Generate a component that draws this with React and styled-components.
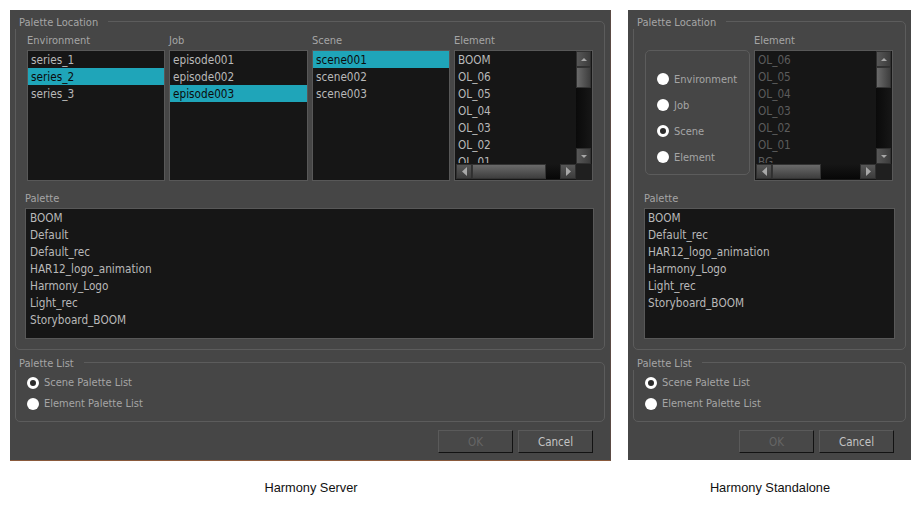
import React from "react";
import styled, { createGlobalStyle } from "styled-components";

const Global = createGlobalStyle`
  html, body { margin: 0; background: #fff; }
  body { font-family: "DejaVu Sans", "Noto Sans", sans-serif; font-stretch: condensed; font-size: 11px; }
`;

const Page = styled.div`
  display: flex;
  gap: 17px;
  width: 923px;
  height: 512px;
  box-sizing: border-box;
  padding: 10px 0 0 10px;
`;
const Column = styled.div`
  display: flex;
  flex-direction: column;
  width: ${(p) => p.$width}px;
`;
const Dialog = styled.div`
  box-sizing: border-box;
  height: ${(p) => p.$height}px;
  padding: 11px 5px 0;
  background: #464646;
  display: flex;
  flex-direction: column;
  border-right: ${(p) => (p.$edge ? "1px solid #5a4a44" : "0")};
  border-bottom: ${(p) => (p.$edge ? "1px solid #8a5a3c" : "0")};
`;
const Caption = styled.div`
  margin-top: ${(p) => p.$top}px;
  padding-left: 1px;
  text-align: center;
  font-family: "Liberation Sans", Arial, sans-serif;
  font-stretch: normal;
  font-size: 12.8px;
  line-height: 16px;
  color: #111;
`;
const Group = styled.section`
  position: relative;
  box-sizing: border-box;
  height: ${(p) => p.$height}px;
  margin-bottom: ${(p) => p.$bottom}px;
  padding: ${(p) => p.$top}px 10px 0 ${(p) => p.$side}px;
  border: 1px solid #5c5c5c;
  border-radius: 5px;
`;
const GroupTitle = styled.h2`
  position: absolute;
  left: -1px;
  top: -6px;
  margin: 0;
  padding: 0 10px 0 4px;
  background: #464646;
  color: #a5a5a5;
  font-size: 11px;
  font-weight: 400;
  line-height: 13px;
`;
const Lists = styled.div`
  display: grid;
  grid-template-columns: ${(p) => p.$cols};
  column-gap: 4px;
  margin-left: ${(p) => p.$left}px;
  margin-right: ${(p) => p.$right}px;
`;
const Field = styled.div`
  display: flex;
  flex-direction: column;
`;
const Label = styled.div`
  height: 17px;
  margin-top: ${(p) => p.$top || 0}px;
  color: #a5a5a5;
  line-height: 15px;
`;
const ListBox = styled.div`
  position: relative;
  box-sizing: border-box;
  height: 131px;
  background: #161616;
  border: 1px solid #585858;
  overflow: hidden;
`;
const Viewport = styled.div`
  height: 112px;
  overflow: hidden;
`;
const Item = styled.div`
  height: 17px;
  font-size: 11.7px;
  line-height: 18px;
  padding-left: ${(p) => p.$pad}px;
  white-space: nowrap;
  color: ${(p) => (p.$selected ? "#0c0c0c" : p.$dim ? "#5c5c5c" : "#b9b9b9")};
  background: ${(p) => (p.$selected ? "#1fa5b9" : "transparent")};
`;
const VBar = styled.div`
  position: absolute;
  top: 0;
  right: 1px;
  width: 15px;
  bottom: 16px;
  display: flex;
  flex-direction: column;
  background: linear-gradient(90deg, #0a0a0a, #161616);
`;
const HBar = styled.div`
  position: absolute;
  left: 1px;
  right: 16px;
  bottom: 1px;
  height: 15px;
  display: flex;
  background: linear-gradient(180deg, #161616, #070707);
`;
const Corner = styled.div`
  position: absolute;
  right: 0;
  bottom: 0;
  width: 16px;
  height: 16px;
  background: #1f1f1f;
`;
const ArrowButton = styled.div`
  flex: none;
  box-sizing: border-box;
  width: ${(p) => (p.$vertical ? "15px" : "16px")};
  height: ${(p) => (p.$vertical ? "16px" : "15px")};
  display: flex;
  align-items: center;
  justify-content: center;
  background: linear-gradient(${(p) => (p.$vertical ? "90deg" : "180deg")}, #575757, #3c3c3c);
  border: 1px solid #303030;
`;
const Thumb = styled.div`
  flex: none;
  box-sizing: border-box;
  ${(p) => (p.$vertical ? `height: ${p.$size}px;` : `width: ${p.$size}px;`)}
  background: linear-gradient(${(p) => (p.$vertical ? "90deg" : "180deg")}, #6a6a6a, #3e3e3e);
  border: 1px solid #333;
`;
const Track = styled.div`
  flex: 1;
`;
const RadioBox = styled.div`
  box-sizing: border-box;
  height: 125px;
  margin-top: 17px;
  border: 1px solid #5c5c5c;
  border-radius: 5px;
  padding: 11px 0 0 11px;
  display: flex;
  flex-direction: column;
  justify-content: center;
  gap: 9px;
`;
const RadioRow = styled.div`
  display: flex;
  align-items: center;
  gap: 5px;
  height: 17px;
  color: #a5a5a5;
`;
const RadioDot = styled.span`
  flex: none;
  box-sizing: border-box;
  width: 12px;
  height: 12px;
  border-radius: 50%;
  background: ${(p) => (p.$on ? "#2b2b2b" : "#fff")};
  border: ${(p) => (p.$on ? "3px solid #fff" : "0")};
`;
const RadioStack = styled.div`
  display: flex;
  flex-direction: column;
  gap: 4px;
  padding: 0 0 0 ${(p) => p.$left}px;
`;
const Buttons = styled.div`
  display: flex;
  justify-content: flex-end;
  gap: 5px;
  padding-right: ${(p) => p.$right}px;
`;
const Button = styled.button`
  box-sizing: border-box;
  width: 75px;
  height: 23px;
  padding: 1px 0 0;
  font-family: inherit;
  font-stretch: condensed;
  font-size: 11.5px;
  background: #484848;
  color: ${(p) => (p.disabled ? "#656565" : "#c4c4c4")};
  border: 1px solid;
  border-color: #5a5a5a #121212 #121212 #5a5a5a;
`;

const Arrow = ({ dir }) => {
  const pts = {
    up: "0,4 6,4 3,1",
    down: "0,1 6,1 3,4",
    left: "5,0 5,9 0,4.5",
    right: "0,0 0,9 5,4.5",
  }[dir];
  const horizontal = dir === "left" || dir === "right";
  return (
    <svg width={horizontal ? 5 : 6} height={horizontal ? 9 : 5} viewBox={horizontal ? "0 0 5 9" : "0 0 6 5"}>
      <polygon points={pts} fill="#a8a8a8" />
    </svg>
  );
};

const Scrollbars = ({ vThumb, hThumb }) => (
  <>
    <VBar>
      <ArrowButton $vertical><Arrow dir="up" /></ArrowButton>
      <Thumb $vertical $size={vThumb} />
      <Track />
      <ArrowButton $vertical><Arrow dir="down" /></ArrowButton>
    </VBar>
    <HBar>
      <ArrowButton><Arrow dir="left" /></ArrowButton>
      <Thumb $size={hThumb} />
      <Track />
      <ArrowButton><Arrow dir="right" /></ArrowButton>
    </HBar>
    <Corner />
  </>
);

const List = ({ items, selected, pad = 3 }) => (
  <ListBox>
    {items.map((t) => (
      <Item key={t} $selected={t === selected} $pad={pad}>{t}</Item>
    ))}
  </ListBox>
);

const ScrollList = ({ items, dim, hThumb }) => (
  <ListBox>
    <Viewport>
      {items.map((t) => (
        <Item key={t} $pad={3} $dim={dim}>{t}</Item>
      ))}
    </Viewport>
    <Scrollbars vThumb={21} hThumb={hThumb} />
  </ListBox>
);

const PaletteSection = ({ items, pad }) => (
  <Field>
    <Label $top={10}>Palette</Label>
    <List items={items} pad={pad} />
  </Field>
);

const PaletteListGroup = ({ side, left }) => (
  <Group $height={60} $top={11} $bottom={8} $side={side}>
    <GroupTitle>Palette List</GroupTitle>
    <RadioStack $left={left}>
      <RadioRow><RadioDot $on />Scene Palette List</RadioRow>
      <RadioRow><RadioDot />Element Palette List</RadioRow>
    </RadioStack>
  </Group>
);

const Actions = ({ right }) => (
  <Buttons $right={right}>
    <Button disabled>OK</Button>
    <Button>Cancel</Button>
  </Buttons>
);

export default function App() {
  return (
    <Page>
      <Global />
      <Column $width={601}>
        <Dialog $height={451} $edge>
          <Group $height={329} $top={11} $bottom={12} $side={9}>
            <GroupTitle>Palette Location</GroupTitle>
            <Lists $cols="138px 139px 138px 139px" $left={2} $right={1}>
              <Field>
                <Label>Environment</Label>
                <List items={["series_1", "series_2", "series_3"]} selected="series_2" />
              </Field>
              <Field>
                <Label>Job</Label>
                <List items={["episode001", "episode002", "episode003"]} selected="episode003" />
              </Field>
              <Field>
                <Label>Scene</Label>
                <List items={["scene001", "scene002", "scene003"]} selected="scene001" />
              </Field>
              <Field>
                <Label>Element</Label>
                <ScrollList items={["BOOM", "OL_06", "OL_05", "OL_04", "OL_03", "OL_02", "OL_01"]} hThumb={74} />
              </Field>
            </Lists>
            <PaletteSection
              pad={4}
              items={["BOOM", "Default", "Default_rec", "HAR12_logo_animation", "Harmony_Logo", "Light_rec", "Storyboard_BOOM"]}
            />
          </Group>
          <PaletteListGroup side={9} left={2} />
          <Actions right={12} />
        </Dialog>
        <Caption $top={19}>Harmony Server</Caption>
      </Column>
      <Column $width={283}>
        <Dialog $height={450}>
          <Group $height={329} $top={11} $bottom={12} $side={10}>
            <GroupTitle>Palette Location</GroupTitle>
            <Lists $cols="105px 139px" $left={1} $right={0}>
              <RadioBox>
                {["Environment", "Job", "Scene", "Element"].map((t) => (
                  <RadioRow key={t}>
                    <RadioDot $on={t === "Scene"} />
                    {t}
                  </RadioRow>
                ))}
              </RadioBox>
              <Field>
                <Label>Element</Label>
                <ScrollList items={["OL_06", "OL_05", "OL_04", "OL_03", "OL_02", "OL_01", "BG"]} dim hThumb={49} />
              </Field>
            </Lists>
            <PaletteSection
              pad={3}
              items={["BOOM", "Default_rec", "HAR12_logo_animation", "Harmony_Logo", "Light_rec", "Storyboard_BOOM"]}
            />
          </Group>
          <PaletteListGroup side={10} left={1} />
          <Actions right={12} />
        </Dialog>
        <Caption $top={20}>Harmony Standalone</Caption>
      </Column>
    </Page>
  );
}
